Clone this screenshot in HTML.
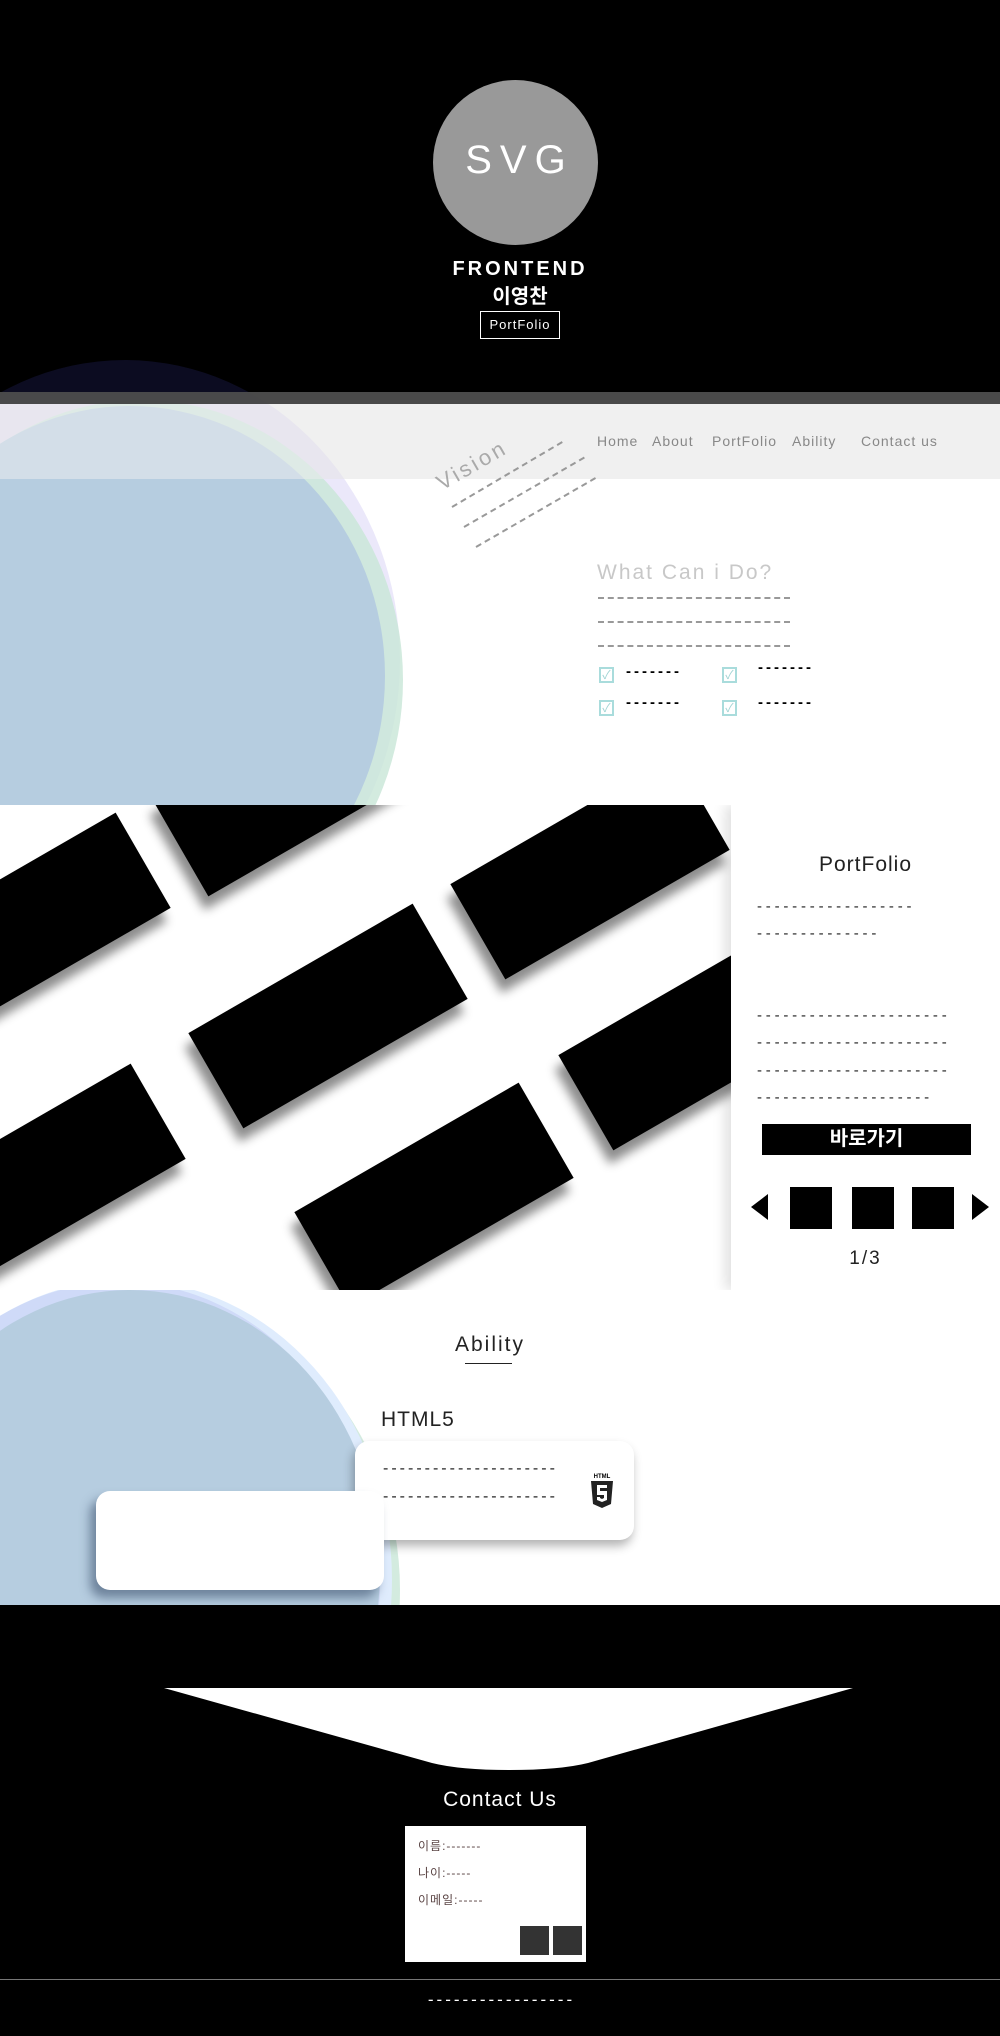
<!DOCTYPE html>
<html><head><meta charset="utf-8"><style>
*{margin:0;padding:0;box-sizing:border-box}
body{width:1000px;height:2036px;position:relative;overflow:hidden;background:#fff;font-family:"Liberation Sans","Noto Sans CJK KR",sans-serif}
.a{position:absolute}
.c{border-radius:50%;position:absolute}
.dash{position:absolute;border-top:2px dashed #999;height:0}
.rect{position:absolute;width:259px;height:110px;background:#000;transform:translate(-50%,-50%) rotate(-30deg);box-shadow:-10px 10px 10px rgba(0,0,0,.45)}
.nav{position:absolute;top:433px;font-size:14px;color:#888;letter-spacing:1px}
.chk{position:absolute;width:15px;height:16px;border:2px solid #a9dcdc;color:#9fd3d3;font-size:12px;line-height:12px;text-align:center;background:#fff}
.dt{position:absolute;font-size:15px;font-weight:bold;letter-spacing:3px;color:#000}
.pd{position:absolute;left:757px;font-size:15px;color:#222;letter-spacing:3.8px}
</style></head><body>
<!-- header -->
<div class="a" style="left:0;top:0;width:1000px;height:392px;background:#000;overflow:hidden">
<div class="c" style="left:-150px;top:360px;width:550px;height:600px;background:rgba(40,40,110,.3)"></div>
</div>
<div class="c" style="left:433px;top:80px;width:165px;height:165px;background:#999"></div>
<div class="a" style="left:433px;top:138px;width:165px;text-align:center;color:#fff;font-size:40px;letter-spacing:8px;text-indent:8px">SVG</div>
<div class="a" style="left:400px;top:258px;width:240px;text-align:center;color:#fff;font-size:20px;letter-spacing:3px;font-weight:bold">FRONTEND</div>
<div class="a" style="left:400px;top:280px;width:240px;text-align:center;color:#fff;font-size:20px;font-weight:bold">이영찬</div>
<div class="a" style="left:480px;top:311px;width:80px;height:28px;border:1px solid #fff;color:#fff;font-size:13px;text-align:center;line-height:26px;letter-spacing:1px">PortFolio</div>
<!-- band base -->
<div class="a" style="left:0;top:404px;width:1000px;height:75px;background:#f0f0f0"></div>
<!-- circles section 2 -->
<div class="a" style="left:0;top:392px;width:1000px;height:413px;overflow:hidden">
<div class="c" style="left:-150px;top:-32px;width:550px;height:600px;background:rgba(190,180,240,.3)"></div>
<div class="c" style="left:-120px;top:8px;width:523px;height:560px;background:rgba(200,230,215,.8)"></div>
<div class="c" style="left:-125px;top:14px;width:510px;height:540px;background:#b6cde0"></div>
</div>
<!-- bands -->
<div class="a" style="left:0;top:392px;width:1000px;height:12px;background:rgba(64,64,64,.95)"></div>
<div class="a" style="left:0;top:404px;width:1000px;height:75px;background:rgba(240,240,240,.5)"></div>
<div class="nav" style="left:597px">Home</div>
<div class="nav" style="left:652px">About</div>
<div class="nav" style="left:712px">PortFolio</div>
<div class="nav" style="left:792px">Ability</div>
<div class="nav" style="left:861px">Contact us</div>
<div class="a" style="left:445px;top:470px;font-size:22px;color:#aaa;letter-spacing:3px;transform:rotate(-30deg);transform-origin:left bottom">Vision</div>
<div class="dash" style="left:452px;top:506px;width:128px;transform:rotate(-30.5deg);transform-origin:left center"></div>
<div class="dash" style="left:464px;top:526px;width:139px;transform:rotate(-30deg);transform-origin:left center"></div>
<div class="dash" style="left:476px;top:546px;width:138px;transform:rotate(-30deg);transform-origin:left center"></div>
<div class="a" style="left:597px;top:561px;font-size:21px;color:#c8c8c8;letter-spacing:2px">What Can i Do?</div>
<div class="dash" style="left:598px;top:597px;width:192px"></div>
<div class="dash" style="left:598px;top:621px;width:192px"></div>
<div class="dash" style="left:598px;top:645px;width:192px"></div>
<div class="chk" style="left:599px;top:667px">✓</div><div class="dt" style="left:626px;top:663px">-------</div>
<div class="chk" style="left:722px;top:667px">✓</div><div class="dt" style="left:758px;top:659px">-------</div>
<div class="chk" style="left:599px;top:700px">✓</div><div class="dt" style="left:626px;top:694px">-------</div>
<div class="chk" style="left:722px;top:700px">✓</div><div class="dt" style="left:758px;top:694px">-------</div>
<!-- portfolio section -->
<div class="a" style="left:0;top:805px;width:1000px;height:485px;overflow:hidden;background:#fff">
<div class="rect" style="left:293px;top:-21px"></div>
<div class="rect" style="left:31px;top:120px"></div>
<div class="rect" style="left:590px;top:62px"></div>
<div class="rect" style="left:328px;top:211px"></div>
<div class="rect" style="left:698px;top:233px"></div>
<div class="rect" style="left:46px;top:371px"></div>
<div class="rect" style="left:434px;top:390px"></div>
<div class="a" style="left:731px;top:0;width:269px;height:485px;background:#fff;box-shadow:-6px 0 12px rgba(0,0,0,.12)"></div>
</div>
<div class="a" style="left:731px;top:853px;width:269px;text-align:center;font-size:21px;color:#222;letter-spacing:1px">PortFolio</div>
<div class="pd" style="top:898px">------------------</div>
<div class="pd" style="top:925px">--------------</div>
<div class="pd" style="top:1007px">----------------------</div>
<div class="pd" style="top:1034px">----------------------</div>
<div class="pd" style="top:1062px">----------------------</div>
<div class="pd" style="top:1089px">--------------------</div>
<div class="a" style="left:762px;top:1124px;width:209px;height:31px;background:#000;color:#fff;font-size:20px;font-weight:bold;text-align:center;line-height:31px">바로가기</div>
<div class="a" style="left:751px;top:1194px;width:0;height:0;border-top:13px solid transparent;border-bottom:13px solid transparent;border-right:17px solid #000"></div>
<div class="a" style="left:790px;top:1187px;width:42px;height:42px;background:#000"></div>
<div class="a" style="left:852px;top:1187px;width:42px;height:42px;background:#000"></div>
<div class="a" style="left:912px;top:1187px;width:42px;height:42px;background:#000"></div>
<div class="a" style="left:972px;top:1194px;width:0;height:0;border-top:13px solid transparent;border-bottom:13px solid transparent;border-left:17px solid #000"></div>
<div class="a" style="left:731px;top:1248px;width:269px;text-align:center;font-size:19px;color:#222;letter-spacing:2px">1/3</div>
<!-- ability -->
<div class="a" style="left:0;top:1290px;width:1000px;height:315px;overflow:hidden;background:#fff">
<div class="c" style="left:-150px;top:0;width:550px;height:600px;background:rgba(200,230,215,.8)"></div>
<div class="c" style="left:-140px;top:-10px;width:532px;height:600px;background:#dfecfd"></div>
<div class="c" style="left:-140px;top:-8px;width:520px;height:600px;background:#cfdaf8"></div>
<div class="c" style="left:-120px;top:0;width:500px;height:560px;background:#b6cde0"></div>
</div>
<div class="a" style="left:400px;top:1333px;width:180px;text-align:center;font-size:21px;color:#222;letter-spacing:2px">Ability</div>
<div class="a" style="left:465px;top:1363px;width:47px;height:1px;background:#222"></div>
<div class="a" style="left:381px;top:1408px;font-size:21px;color:#222;letter-spacing:1px">HTML5</div>
<div class="a" style="left:355px;top:1441px;width:279px;height:99px;background:#fff;border-radius:14px;box-shadow:-2px 6px 10px rgba(0,0,0,.3)"></div>
<div class="a" style="left:383px;top:1455px;font-size:16px;color:#222;letter-spacing:3px;line-height:28px">---------------------<br>---------------------</div>
<svg class="a" style="left:588px;top:1472px" width="28" height="38" viewBox="0 0 28 38"><text x="14" y="6" font-size="6" font-weight="bold" text-anchor="middle" font-family="Liberation Sans">HTML</text><path d="M3 9h22l-2 23-9 4-9-4z" fill="#222"/><path d="M9 13h10v3h-7v3h7v9l-5 2-5-2v-3h3v1l2 1 2-1v-3H9z" fill="#fff"/></svg>
<div class="a" style="left:96px;top:1491px;width:288px;height:99px;background:#fff;border-radius:14px;box-shadow:-6px 8px 10px rgba(40,60,90,.5)"></div>
<!-- footer -->
<div class="a" style="left:0;top:1605px;width:1000px;height:431px;background:#000"></div>
<svg class="a" style="left:0;top:1680px" width="1000" height="100"><path d="M164 8H853L588 83Q560 90 509 90Q460 90 432 83Z" fill="#fff"/></svg>
<div class="a" style="left:400px;top:1788px;width:200px;text-align:center;color:#fff;font-size:21px;letter-spacing:1px">Contact Us</div>
<div class="a" style="left:405px;top:1826px;width:181px;height:136px;background:#fff"></div>
<div class="a" style="left:418px;top:1833px;font-size:12px;color:#5a4444;line-height:27px;letter-spacing:1px">이름:-------<br>나이:-----<br>이메일:-----</div>
<div class="a" style="left:520px;top:1926px;width:29px;height:29px;background:#333"></div>
<div class="a" style="left:553px;top:1926px;width:29px;height:29px;background:#333"></div>
<div class="a" style="left:0;top:1979px;width:1000px;height:1px;background:#777"></div>
<div class="a" style="left:380px;top:1990px;width:240px;text-align:center;color:#fff;font-size:17px;letter-spacing:3px;text-indent:3px">-----------------</div>
</body></html>
